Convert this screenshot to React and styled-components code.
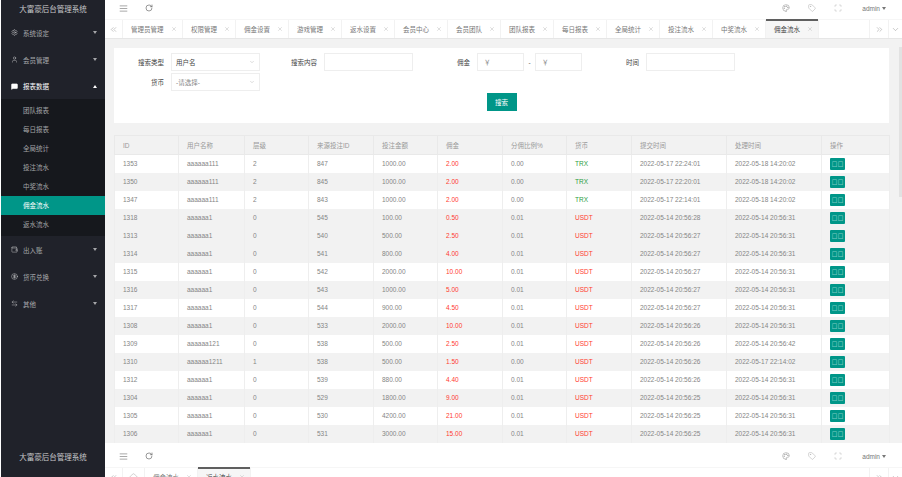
import React from 'react';
import styled, { createGlobalStyle } from 'styled-components';
import {
  AlignJustify, ArrowLeftRight, ChevronDown, ChevronsLeft, ChevronsRight, CircleDollarSign,
  Home, MessageSquare, Palette, RotateCw, Scan, Settings, Tag, User, Wallet, X,
} from 'lucide-react';

const GlobalStyle = createGlobalStyle`
  html, body {
    margin: 0;
    height: 477px;
    overflow: hidden;
    background: #fff;
    font-family: 'Liberation Sans', 'Noto Sans CJK SC', sans-serif;
  }
  * { box-sizing: border-box; }
`;

const Frame = styled.div`
  display: flex;
  height: ${p => p.$height}px;
  overflow: hidden;
`;

const Sidebar = styled.aside`
  width: 104px;
  margin-left: 1px;
  flex-shrink: 0;
  background: #20222a;
  color: rgba(255, 255, 255, 0.6);
  padding-top: ${p => p.$offset || 0}px;
`;

const Logo = styled.div`
  height: 19px;
  padding-bottom: 3px;
  display: flex;
  align-items: center;
  justify-content: center;
  font-size: 7.5px;
  color: rgba(255, 255, 255, 0.75);
`;

const Group = styled.div`
  height: ${p => p.$short ? 26 : 27}px;
  display: flex;
  align-items: center;
  padding: 0 8px 0 10px;
  font-size: 6.5px;
  color: ${p => p.$open ? '#fff' : 'rgba(255, 255, 255, 0.6)'};
`;

const GroupLabel = styled.span`
  flex: 1;
  margin-left: 5px;
`;

const Caret = styled.i`
  width: 0;
  height: 0;
  border-left: 2.5px solid transparent;
  border-right: 2.5px solid transparent;
  border-top: ${p => p.$up ? '0' : '3px solid currentColor'};
  border-bottom: ${p => p.$up ? '3px solid currentColor' : '0'};
`;

const SubMenu = styled.div`
  background: #16181d;
  padding: 2px 0;
`;

const SubItem = styled.div`
  height: 19px;
  line-height: 19px;
  padding-left: 22px;
  font-size: 6.5px;
  background: ${p => p.$active ? '#009688' : 'transparent'};
  color: ${p => p.$active ? '#fff' : 'rgba(255, 255, 255, 0.6)'};
`;

const Main = styled.main`
  position: relative;
  flex: 1;
  min-width: 0;
  display: flex;
  flex-direction: column;
  padding-top: ${p => p.$offset || 0}px;
  background: #fff;
`;

const TopBar = styled.header`
  height: 19px;
  flex-shrink: 0;
  padding: 0 16px 3px 14px;
  display: flex;
  align-items: center;
  color: #666;
`;

const TopIcons = styled.div`
  display: flex;
  align-items: center;
  gap: ${p => p.$gap}px;
`;

const Spacer = styled.div`
  flex: 1;
`;

const Admin = styled.div`
  display: flex;
  align-items: center;
  gap: 2px;
  margin-left: 20px;
  font-size: 6.5px;
  color: #777;
`;

const TabBar = styled.nav`
  height: 20px;
  flex-shrink: 0;
  display: flex;
  border-top: 1px solid #f6f6f6;
  border-bottom: 1px solid #e6e6e6;
`;

const ArrowBox = styled.div`
  width: ${p => p.$w}px;
  flex-shrink: 0;
  display: flex;
  align-items: center;
  justify-content: center;
  color: #888;
  border-right: ${p => p.$right ? '1px solid #f2f2f2' : '0'};
  border-left: ${p => p.$left ? '1px solid #f2f2f2' : '0'};
`;

const Tabs = styled.div`
  flex: 1;
  min-width: 0;
  display: flex;
`;

const Tab = styled.div`
  position: relative;
  display: flex;
  align-items: center;
  justify-content: space-between;
  padding: 0 5px 0 8px;
  width: ${p => p.$w}px;
  font-size: 6.5px;
  color: ${p => p.$active ? '#444' : '#777'};
  background: ${p => p.$active ? '#f6f6f6' : '#fff'};
  border-right: 1px solid #f2f2f2;

  &::before {
    content: '';
    display: ${p => p.$active ? 'block' : 'none'};
    position: absolute;
    left: 0;
    right: 0;
    top: -1px;
    height: 1.5px;
    background: #5f5f5f;
  }
`;

const Content = styled.div`
  flex: 1;
  min-height: 0;
  background: #f2f2f2;
  padding: 9px 13px 0 9px;
`;

const FormCard = styled.section`
  height: 75px;
  padding-top: 5px;
  background: #fff;
`;

const FormRow = styled.div`
  display: flex;
  gap: 7px;
  margin-bottom: 2px;
`;

const Field = styled.div`
  display: flex;
  align-items: center;
  gap: 7px;
`;

const Label = styled.label`
  width: 50px;
  text-align: right;
  font-size: 6.5px;
  color: #444;
`;

const Select = styled.div`
  width: 89px;
  height: 18px;
  padding: 0 4px 0 4px;
  display: flex;
  align-items: center;
  justify-content: space-between;
  border: 1px solid #eee;
  font-size: 6.5px;
  color: ${p => p.$placeholder ? '#888' : '#444'};
`;

const Input = styled.input`
  width: ${p => p.$w}px;
  height: 18px;
  padding: 0 6px;
  border: 1px solid #eee;
  outline: 0;
  font: 6.5px 'Liberation Sans', 'Noto Sans CJK SC', sans-serif;

  &::placeholder {
    color: #888;
  }
`;

const Dash = styled.span`
  width: 11px;
  margin-left: -7px;
  margin-right: -7px;
  text-align: center;
  font-size: 6.5px;
  color: #666;
`;

const ButtonRow = styled.div`
  display: flex;
  justify-content: center;
`;

const SearchButton = styled.button`
  width: 30px;
  height: 18px;
  padding: 0;
  border: 0;
  background: #009688;
  color: #fff;
  font: 6.5px 'Liberation Sans', 'Noto Sans CJK SC', sans-serif;
`;

const Table = styled.table`
  width: 775px;
  margin-top: 12px;
  table-layout: fixed;
  border-collapse: collapse;
  background: #fff;
`;

const Col = styled.col`
  width: ${p => p.$w}px;
`;

const Th = styled.th`
  height: 19px;
  padding: 0 8px;
  text-align: left;
  font-size: 6.5px;
  font-weight: 400;
  color: #999;
  background: #f2f2f2;
  border: 1px solid #e9e9e9;
`;

const Tr = styled.tr`
  background: ${p => p.$grey ? '#f2f2f2' : '#fff'};
`;

const Td = styled.td`
  height: 18px;
  padding: 0 8px;
  font-size: 6.5px;
  white-space: nowrap;
  color: ${p => p.$color || '#858585'};
  border-left: 1px solid #eeeeee;
  border-right: 1px solid #eeeeee;
`;

const ActionButton = styled.span`
  display: block;
  width: 15px;
  height: 12px;
  line-height: 12px;
  text-align: center;
  font-size: 6px;
  color: #7fcac2;
  background: #009688;
  border-radius: 1px;
`;

const ScrollThumb = styled.div`
  position: absolute;
  right: 0;
  top: 47px;
  width: 3px;
  height: 150px;
  background: #e2e2e2;
`;

const topGroups = [
  { label: '系统设定', Icon: Settings },
  { label: '会员管理', Icon: User },
];
const bottomGroups = [
  { label: '出入账', Icon: Wallet },
  { label: '货币兑换', Icon: CircleDollarSign },
  { label: '其他', Icon: ArrowLeftRight },
];
const subItems = ['团队报表', '每日报表', '全局统计', '投注流水', '中奖流水', '佣金流水', '返水流水'];

const tabs = ['管理员管理', '权限管理', '佣金设置', '游戏管理', '返水设置', '会员中心', '会员团队', '团队报表', '每日报表', '全局统计', '投注流水', '中奖流水', '佣金流水'];

const colWidths = [64, 66, 64, 65, 64, 65, 64, 65, 95, 95, 68];
const heads = ['ID', '用户名称', '层级', '来源投注ID', '投注金额', '佣金', '分佣比例%', '货币', '提交时间', '处理时间', '操作'];

const rows = [
  ['1353', 'aaaaaa111', '2', '847', '1000.00', '2.00', '0.00', 'TRX', '2022-05-17 22:24:01', '2022-05-18 14:20:02'],
  ['1350', 'aaaaaa111', '2', '845', '1000.00', '2.00', '0.00', 'TRX', '2022-05-17 22:20:01', '2022-05-18 14:20:02', 1],
  ['1347', 'aaaaaa111', '2', '843', '1000.00', '2.00', '0.00', 'TRX', '2022-05-17 22:14:01', '2022-05-18 14:20:02'],
  ['1318', 'aaaaaa1', '0', '545', '100.00', '0.50', '0.01', 'USDT', '2022-05-14 20:56:28', '2022-05-14 20:56:31', 1],
  ['1313', 'aaaaaa1', '0', '540', '500.00', '2.50', '0.01', 'USDT', '2022-05-14 20:56:27', '2022-05-14 20:56:31', 1],
  ['1314', 'aaaaaa1', '0', '541', '800.00', '4.00', '0.01', 'USDT', '2022-05-14 20:56:27', '2022-05-14 20:56:31', 1],
  ['1315', 'aaaaaa1', '0', '542', '2000.00', '10.00', '0.01', 'USDT', '2022-05-14 20:56:27', '2022-05-14 20:56:31'],
  ['1316', 'aaaaaa1', '0', '543', '1000.00', '5.00', '0.01', 'USDT', '2022-05-14 20:56:27', '2022-05-14 20:56:31', 1],
  ['1317', 'aaaaaa1', '0', '544', '900.00', '4.50', '0.01', 'USDT', '2022-05-14 20:56:27', '2022-05-14 20:56:31'],
  ['1308', 'aaaaaa1', '0', '533', '2000.00', '10.00', '0.01', 'USDT', '2022-05-14 20:56:26', '2022-05-14 20:56:31', 1],
  ['1309', 'aaaaaa121', '0', '538', '500.00', '2.50', '0.01', 'USDT', '2022-05-14 20:56:26', '2022-05-14 20:56:42'],
  ['1310', 'aaaaaa1211', '1', '538', '500.00', '1.50', '0.00', 'USDT', '2022-05-14 20:56:26', '2022-05-17 22:14:02', 1],
  ['1312', 'aaaaaa1', '0', '539', '880.00', '4.40', '0.01', 'USDT', '2022-05-14 20:56:26', '2022-05-14 20:56:31'],
  ['1304', 'aaaaaa1', '0', '529', '1800.00', '9.00', '0.01', 'USDT', '2022-05-14 20:56:25', '2022-05-14 20:56:31', 1],
  ['1305', 'aaaaaa1', '0', '530', '4200.00', '21.00', '0.01', 'USDT', '2022-05-14 20:56:25', '2022-05-14 20:56:31'],
  ['1306', 'aaaaaa1', '0', '531', '3000.00', '15.00', '0.01', 'USDT', '2022-05-14 20:56:25', '2022-05-14 20:56:31', 1],
];

const cellColor = (i, c) => {
  if (i === 5) return '#ff3b30';
  if (i === 7) return c === 'TRX' ? '#2f9e44' : '#ff3b30';
  return undefined;
};

const TopBarContent = () => (
  <TopBar>
    <TopIcons $gap={17}>
      <AlignJustify size={9} strokeWidth={1.5} />
      <RotateCw size={8} strokeWidth={2} />
    </TopIcons>
    <Spacer />
    <TopIcons $gap={18}>
      <Palette size={8} strokeWidth={1.5} color="#888" />
      <Tag size={8} strokeWidth={1.5} color="#aaa" />
      <Scan size={8} strokeWidth={1.5} color="#aaa" />
    </TopIcons>
    <Admin>admin <Caret /></Admin>
  </TopBar>
);

const TabItem = ({ label, active }) => (
  <Tab $active={active} $w={label.length > 4 ? 60 : 53}>
    {label}
    <X size={6} color="#aaa" strokeWidth={1.5} />
  </Tab>
);

const RightArrows = () => (
  <>
    <ArrowBox $w={19} $left><ChevronsRight size={9} strokeWidth={1.2} /></ArrowBox>
    <ArrowBox $w={14} $left><ChevronDown size={9} strokeWidth={1.2} /></ArrowBox>
  </>
);

export default function App() {
  return (
    <>
      <GlobalStyle />
      <Frame $height={443}>
        <Sidebar>
          <Logo>大富豪后台管理系统</Logo>
          {topGroups.map(({ label, Icon }) => (
            <Group key={label}>
              <Icon size={7} strokeWidth={2} />
              <GroupLabel>{label}</GroupLabel>
              <Caret />
            </Group>
          ))}
          <Group $open $short>
            <MessageSquare size={7} fill="#fff" />
            <GroupLabel>报表数据</GroupLabel>
            <Caret $up />
          </Group>
          <SubMenu>
            {subItems.map(s => <SubItem key={s} $active={s === '佣金流水'}>{s}</SubItem>)}
          </SubMenu>
          {bottomGroups.map(({ label, Icon }) => (
            <Group key={label}>
              <Icon size={7} strokeWidth={2} />
              <GroupLabel>{label}</GroupLabel>
              <Caret />
            </Group>
          ))}
        </Sidebar>
        <Main>
          <TopBarContent />
          <TabBar>
            <ArrowBox $w={18} $right><ChevronsLeft size={9} strokeWidth={1.2} /></ArrowBox>
            <Tabs>
              {tabs.map(t => <TabItem key={t} label={t} active={t === '佣金流水'} />)}
            </Tabs>
            <RightArrows />
          </TabBar>
          <Content>
            <FormCard>
              <FormRow>
                <Field>
                  <Label>搜索类型</Label>
                  <Select>用户名<ChevronDown size={6} color="#bbb" /></Select>
                </Field>
                <Field>
                  <Label>搜索内容</Label>
                  <Input $w={89} readOnly />
                </Field>
                <Field>
                  <Label>佣金</Label>
                  <Input $w={47} placeholder="￥" readOnly />
                  <Dash>-</Dash>
                  <Input $w={47} placeholder="￥" readOnly />
                </Field>
                <Field>
                  <Label>时间</Label>
                  <Input $w={89} readOnly />
                </Field>
              </FormRow>
              <FormRow>
                <Field>
                  <Label>货币</Label>
                  <Select $placeholder>-请选择-<ChevronDown size={6} color="#bbb" /></Select>
                </Field>
              </FormRow>
              <ButtonRow>
                <SearchButton>搜索</SearchButton>
              </ButtonRow>
            </FormCard>
            <Table>
              <colgroup>
                {colWidths.map((w, i) => <Col key={i} $w={w} />)}
              </colgroup>
              <thead>
                <tr>{heads.map(h => <Th key={h}>{h}</Th>)}</tr>
              </thead>
              <tbody>
                {rows.map(r => (
                  <Tr key={r[0]} $grey={r[10]}>
                    {r.slice(0, 10).map((c, i) => (
                      <Td key={i} $color={cellColor(i, c)}>{c}</Td>
                    ))}
                    <Td><ActionButton>口口</ActionButton></Td>
                  </Tr>
                ))}
                <Tr>{colWidths.map((w, i) => <Td key={i} />)}</Tr>
              </tbody>
            </Table>
          </Content>
          <ScrollThumb />
        </Main>
      </Frame>
      <Frame $height={34}>
        <Sidebar $offset={5}>
          <Logo>大富豪后台管理系统</Logo>
        </Sidebar>
        <Main $offset={5}>
          <TopBarContent />
          <TabBar>
            <ArrowBox $w={18} $right><ChevronsLeft size={9} strokeWidth={1.2} /></ArrowBox>
            <ArrowBox $w={22} $right><Home size={9} strokeWidth={1} /></ArrowBox>
            <Tabs>
              <TabItem label="佣金流水" />
              <TabItem label="返水流水" active />
            </Tabs>
            <RightArrows />
          </TabBar>
        </Main>
      </Frame>
    </>
  );
}
